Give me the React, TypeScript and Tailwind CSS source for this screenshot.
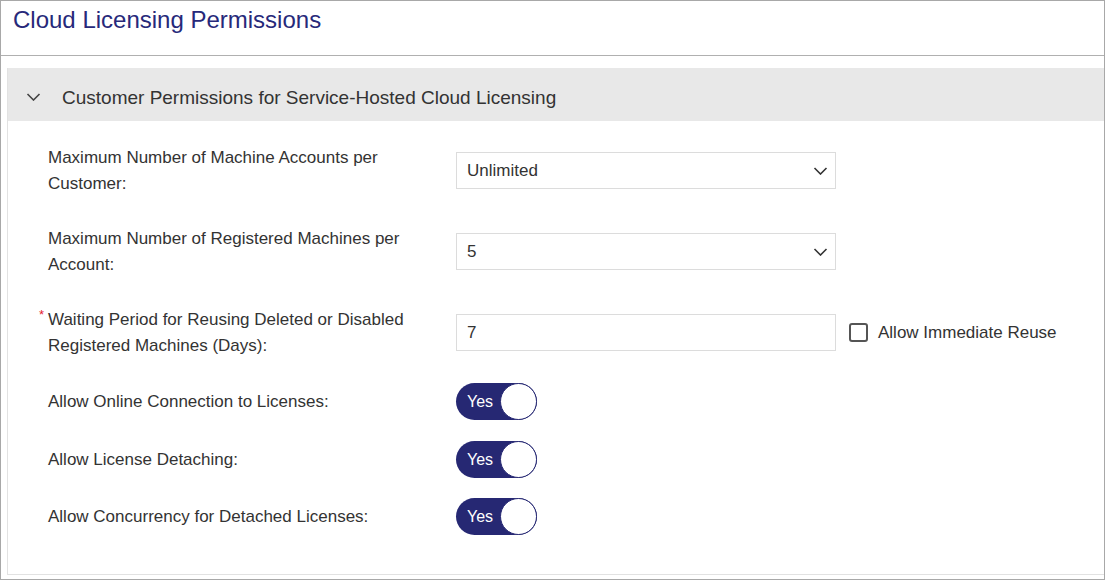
import { useState } from "react";

const font = { fontFamily: '"Liberation Sans", Arial, sans-serif' };

function Chevron({ className }: { className?: string }) {
  return (
    <svg viewBox="0 0 14 8" className={className} fill="none">
      <path d="M1 1l6 6 6-6" stroke="currentColor" strokeWidth="1.6" />
    </svg>
  );
}

function Select({ value }: { value: string }) {
  return (
    <div className="flex h-[37px] w-[380px] items-center justify-between border border-[#dcdcdc] bg-white pl-[10px] pr-[7px] text-[17px] text-[#333]">
      <span>{value}</span>
      <Chevron className="h-[8px] w-[15px] text-[#333]" />
    </div>
  );
}

function Toggle() {
  const [on, setOn] = useState(true);
  return (
    <button
      onClick={() => setOn(!on)}
      className="flex h-[37px] w-[81px] items-center justify-between rounded-full bg-[#262873] pl-[11px] text-[16px] text-white"
    >
      <span>{on ? "Yes" : "No"}</span>
      <span className="h-[37px] w-[37px] rounded-full border border-[#262873] bg-white" />
    </button>
  );
}

function Row({
  label,
  required,
  children,
  className,
}: {
  label: string;
  required?: boolean;
  children: React.ReactNode;
  className?: string;
}) {
  return (
    <div className={`flex items-center ${className ?? ""}`}>
      <div className="relative w-[379px] shrink-0 pt-[1px] text-[17px] leading-[26px] text-[#333]">
        {required && (
          <span className="absolute left-[-9px] top-[2px] text-[13px] leading-[13px] text-[#e5202e]">*</span>
        )}
        {label}
      </div>
      <div className="ml-[29px] flex items-center">{children}</div>
    </div>
  );
}

export default function App() {
  const [reuse, setReuse] = useState(false);

  return (
    <div style={font} className="flex h-[580px] w-[1105px] flex-col border border-[#a8a8a8] bg-white">
      {/* Page header */}
      <div className="h-[55px] shrink-0 border-b border-[#b0b0b0] pl-[12px] pt-[5px]">
        <h1 className="text-[24px] leading-[28px] text-[#27297a]">Cloud Licensing Permissions</h1>
      </div>

      {/* Accordion panel */}
      <div className="mb-[4px] ml-[6px] mt-[12px] flex flex-1 flex-col border-b border-l border-[#e2e2e2]">
        <div className="flex h-[53px] shrink-0 items-start bg-[#e8e8e8] pt-[19px]">
          <Chevron className="ml-[18px] mt-[6px] h-[8px] w-[15px] text-[#444]" />
          <span className="ml-[21px] text-[19px] leading-[22px] text-[#333]">
            Customer Permissions for Service-Hosted Cloud Licensing
          </span>
        </div>

        <div className="pl-[40px] pt-[23px]">
          <Row label="Maximum Number of Machine Accounts per Customer:">
            <Select value="Unlimited" />
          </Row>
          <Row label="Maximum Number of Registered Machines per Account:" className="mt-[28px]">
            <Select value="5" />
          </Row>
          <Row label="Waiting Period for Reusing Deleted or Disabled Registered Machines (Days):" required className="mt-[28px]">
            <input
              defaultValue="7"
              className="h-[37px] w-[380px] border border-[#dcdcdc] pl-[10px] text-[17px] text-[#333] outline-none"
            />
            <label className="ml-[13px] flex cursor-pointer items-center text-[17px] text-[#333]">
              <span
                onClick={() => setReuse(!reuse)}
                className="flex h-[19px] w-[19px] items-center justify-center rounded-[3px] border-2 border-[#555]"
              >
                {reuse && <span className="h-[9px] w-[9px] bg-[#555]" />}
              </span>
              <span className="ml-[10px]">Allow Immediate Reuse</span>
            </label>
          </Row>
          <Row label="Allow Online Connection to Licenses:" className="mt-[24px]">
            <Toggle />
          </Row>
          <Row label="Allow License Detaching:" className="mt-[21px]">
            <Toggle />
          </Row>
          <Row label="Allow Concurrency for Detached Licenses:" className="mt-[20px]">
            <Toggle />
          </Row>
        </div>
      </div>
    </div>
  );
}
